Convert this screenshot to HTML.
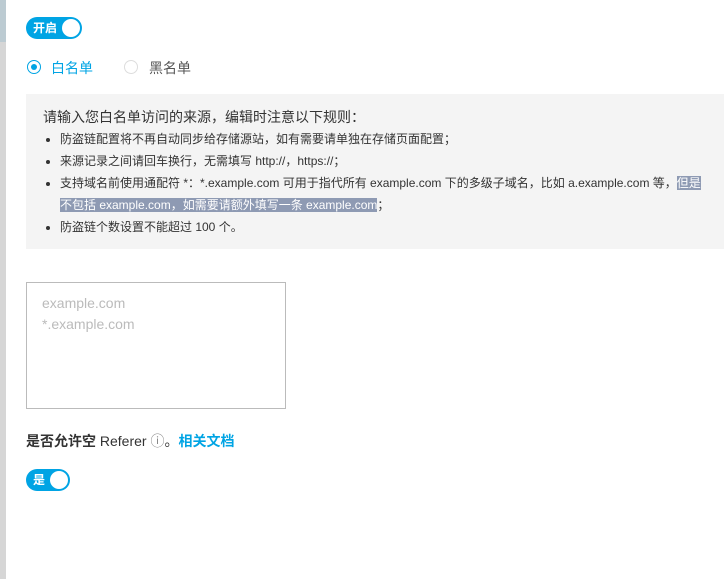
<!DOCTYPE html>
<html><head><meta charset="utf-8"><style>
body{margin:0;width:724px;height:579px;overflow:hidden;background:#fff;font-family:"Liberation Sans","Noto Sans CJK SC",sans-serif;position:relative;color:#333}
.strip{position:absolute;left:0;top:0;width:6px;height:579px;background:#d6d6d6}
.strip .t{position:absolute;left:0;top:0;width:6px;height:42px;background:#bccbd2}
.tog{position:absolute;background:#00a4e4;border-radius:11px;height:22px;color:#fff;font-size:12px;font-weight:bold;line-height:22px}
.tog .k{position:absolute;right:2px;top:2px;width:18px;height:18px;border-radius:50%;background:#fff}
.radio{position:absolute;width:14px;height:14px;border-radius:50%;box-sizing:border-box}
.box{position:absolute;left:26px;top:94px;width:698px;height:155px;background:#f4f4f4}
.box .h{position:absolute;left:17px;top:13px;font-size:14px;color:#333}
.box ul{position:absolute;left:18px;top:34px;margin:0;padding:0 0 0 16px;font-size:12px;color:#333;line-height:22px;width:643px}
.sel{background:#8e9ab3;color:#fff}
</style></head><body>
<div class="strip"><div class="t"></div></div>
<div class="tog" style="left:26px;top:17px;width:56px"><span style="margin-left:7px">开启</span><div class="k"></div></div>
<div class="radio" style="left:27px;top:60px;border:1px solid #00a4e4"><div style="position:absolute;left:3px;top:3px;width:6px;height:6px;border-radius:50%;background:#00a4e4"></div></div>
<div style="position:absolute;left:51px;top:58px;font-size:14px;color:#00a4e4">白名单</div>
<div class="radio" style="left:124px;top:60px;border:1px solid #ddd"></div>
<div style="position:absolute;left:149px;top:58px;font-size:14px;color:#555">黑名单</div>
<div class="box"><div class="h">请输入您白名单访问的来源，编辑时注意以下规则：</div>
<ul>
<li>防盗链配置将不再自动同步给存储源站，如有需要请单独在存储页面配置；</li>
<li>来源记录之间请回车换行，无需填写 http://，https://；</li>
<li>支持域名前使用通配符 *：*.example.com 可用于指代所有 example.com 下的多级子域名，比如 a.example.com 等，<span class="sel">但是不包括 example.com，如需要请额外填写一条 example.com</span>；</li>
<li>防盗链个数设置不能超过 100 个。</li>
</ul></div>
<div style="position:absolute;left:26px;top:282px;width:258px;height:125px;border:1px solid #bbb;font-size:14px;color:#bbb;line-height:21px"><div style="padding:10px 0 0 15px">example.com<br>*.example.com</div></div>
<div style="position:absolute;left:26px;top:431px;font-size:14px;color:#333"><b>是否允许空</b> Referer <span style="color:#888">ⓘ</span>。<b style="color:#00a4e4">相关文档</b></div>
<div class="tog" style="left:26px;top:469px;width:44px"><span style="margin-left:7px">是</span><div class="k"></div></div>
</body></html>
